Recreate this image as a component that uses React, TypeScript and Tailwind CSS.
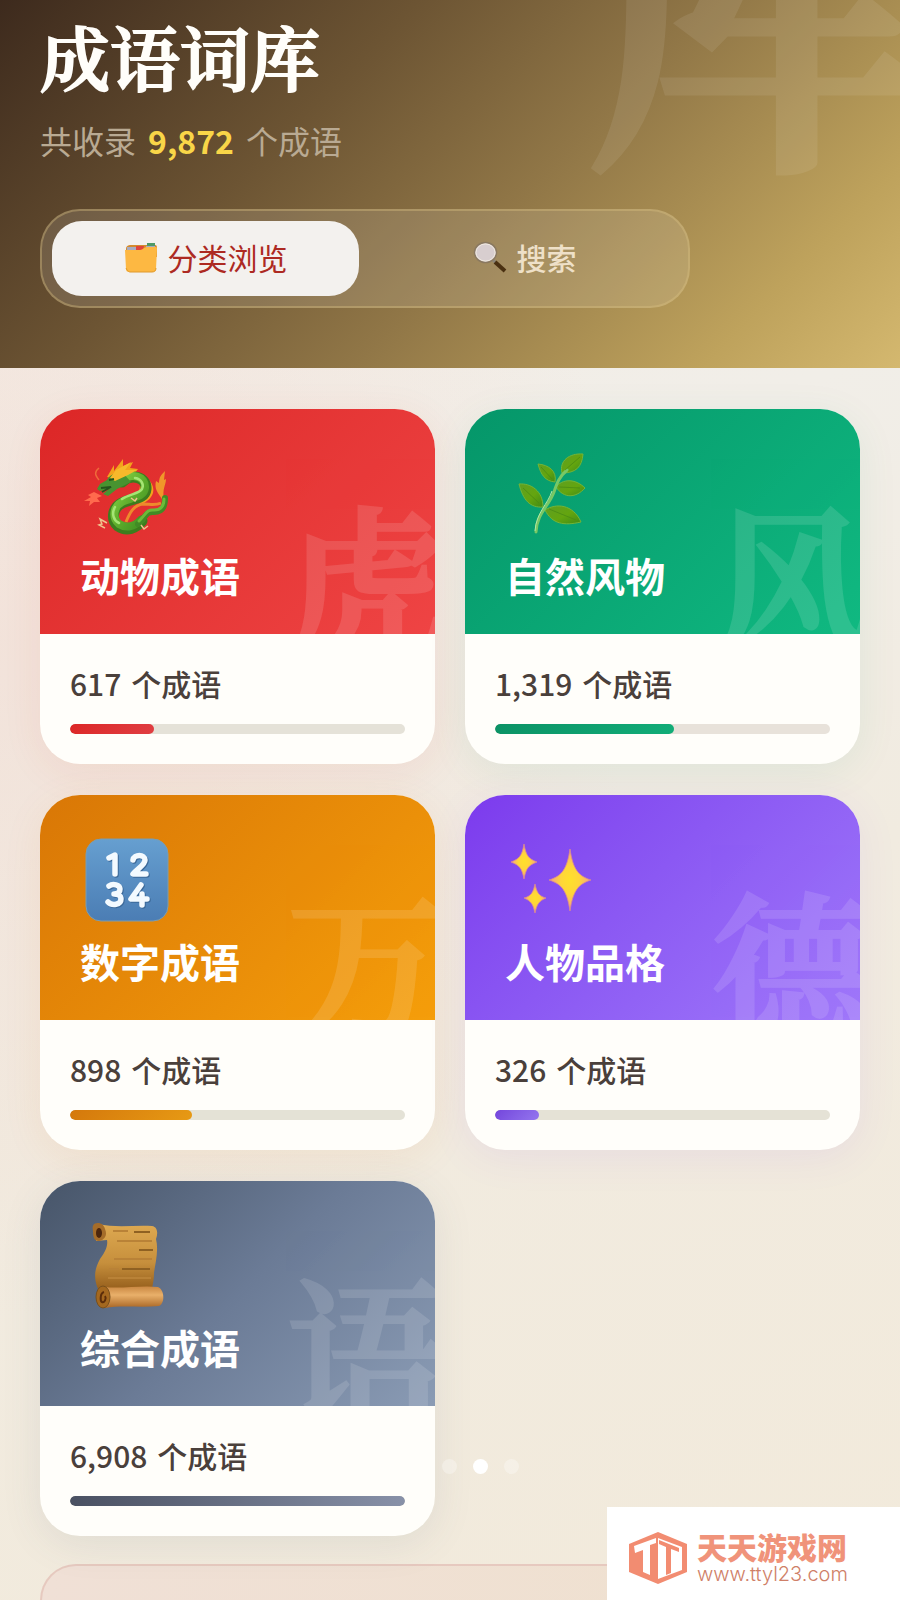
import type { ReactNode } from "react";

function DragonIcon() {
  return (
    <svg viewBox="0 0 94 90" className="h-[90px] w-[94px]" aria-hidden="true">
      <defs>
        <linearGradient id="dragon-body" x1="0" y1="0" x2="1" y2="1">
          <stop offset="0" stopColor="#8bd64a" />
          <stop offset="0.5" stopColor="#5fae2c" />
          <stop offset="1" stopColor="#3d8f22" />
        </linearGradient>
      </defs>
      <path d="M27 28l7-12 0 6 9-12 0 7 10-4-3 6 8 1-3 4c14 3 20 12 18 20-2 6-6 8-12 12l-4-4 4-20-20-7-9 4z" fill="#f3a31c" />
      <path d="M82 50c-4-6-8-10-6-18l3 2c0-6 2-8 6-12l-1 9 2-1c0 6-4 10-2 20z" fill="#f0962a" />
      <path d="M46 73c4-10 8-17 17-18 7 0 12 2 18-1" fill="none" stroke="#ee8a2c" strokeWidth="3" />
      <path d="M42 33c9-9 25-5 24 7-1 11-15 9-24 14-10 5-11 17-4 23 9 6 18 2 24-5" fill="none" stroke="#3c7d1e" strokeWidth="11" strokeLinecap="round" />
      <path d="M42 32c9-9 24-5 23 7-1 10-14 9-23 14-9 5-10 16-3 22 8 5 16 2 22-4" fill="none" stroke="url(#dragon-body)" strokeWidth="8" strokeLinecap="round" />
      <path d="M58 75c8-7 8-13 16-12 7 0 11-3 11-14" fill="none" stroke="#418b25" strokeWidth="6" strokeLinecap="round" />
      <path d="M59 72c7-7 8-12 15-11 6 0 10-3 10-11" fill="none" stroke="#6cba39" strokeWidth="3" strokeLinecap="round" />
      <path d="M55 29c7 1 9 7 7 11-3 5-13 5-20 10M35 58c-4 7-1 14 4 16" fill="none" stroke="#a5e574" strokeWidth="2.5" strokeLinecap="round" />
      <path d="M43 24c-8 0-13 1-16 7l-7 4-3 5 3 2 9-2-6 5 5 2 9-7 14-7z" fill="#489330" />
      <path d="M30 29l6-8 15-8-6 8 12 0-9 5-13 6z" fill="#f7b92b" />
      <path d="M21 39l10-1-9 5M29 31l5-1" fill="none" stroke="#24551d" strokeWidth="2" />
      <path d="M19 31c-4-5-5-8 0-12" fill="none" stroke="#ee6a3a" strokeWidth="1.5" />
      <path d="M14 43l-6 3 3 2-7 4 6 0-1 5 5-4 6 0-3-4 5-2z" fill="#ff6a4d" />
      <path d="M27 74l-7-4 2 5-3 1 6 3M61 76l3 4 4-3M51 49l4 3 2-3" fill="none" stroke="#efc28c" strokeWidth="1.5" />
    </svg>
  );
}

function HerbIcon() {
  return (
    <svg viewBox="0 0 94 90" className="h-[90px] w-[94px]" aria-hidden="true">
      <defs>
        <linearGradient id="herb-leaf" x1="0" y1="0" x2="1" y2="1">
          <stop offset="0" stopColor="#5f9f22" />
          <stop offset="0.55" stopColor="#64a50f" />
          <stop offset="1" stopColor="#3f8b16" />
        </linearGradient>
      </defs>
      <g fill="url(#herb-leaf)" stroke="#74b436" strokeWidth="1" strokeLinejoin="round">
        <path d="M14 35c12-1 24 7 24 23-13 1-20-7-24-23z" />
        <path d="M33 15c11 1 19 7 17 18-10-1-14-7-17-18z" />
        <path d="M78 5c-14-1-24 7-21 19 14 0 20-6 21-19z" />
        <path d="M80 39c-10-10-23-9-29-1 8 12 20 11 29 1z" />
        <path d="M76 73C68 55 51 54 40 61c7 14 19 16 36 12z" />
      </g>
      <path d="M31 83c1-19 13-26 18-40 3-9 5-15 13-22" fill="none" stroke="#77c865" strokeWidth="3" strokeLinecap="round" />
      <path d="M30 82c1-18 13-27 17-40" fill="none" stroke="#b3e8a5" strokeWidth="1" />
      <path d="M18 39l16 15M36 18l11 12M75 8L60 21M54 38l21 1M44 60l27 11" stroke="#4a8c14" strokeWidth="0.8" />
    </svg>
  );
}

const KEYCAP_DIGITS = [
  "M29 23l6-3v19",
  "M53 25c1-6 12-6 12 0 0 5-7 8-12 14h13",
  "M29 51c4-3 11-1 11 3 0 4-3 5-6 5 4 0 7 2 7 5 0 6-9 7-13 3",
  "M61 50L51 64h16M62 59v11",
].join("");

function NumbersIcon() {
  return (
    <svg viewBox="0 0 94 90" className="h-[90px] w-[94px]" aria-hidden="true">
      <defs>
        <linearGradient id="key-face" x1="0" y1="0" x2="0" y2="1">
          <stop offset="0" stopColor="#669fd0" />
          <stop offset="1" stopColor="#4b7db4" />
        </linearGradient>
      </defs>
      <rect x="6" y="4" width="82" height="82" rx="15" fill="url(#key-face)" stroke="#7b9db0" />
      <g fill="none" strokeWidth="5.500" strokeLinecap="round" strokeLinejoin="round">
        <path d={KEYCAP_DIGITS} stroke="#3b6898" transform="translate(1 1)" />
        <path d={KEYCAP_DIGITS} stroke="#f3faff" />
      </g>
    </svg>
  );
}

function SparklesIcon() {
  return (
    <svg viewBox="0 0 94 90" className="h-[90px] w-[94px]" aria-hidden="true">
      <defs>
        <radialGradient id="spark">
          <stop offset="0" stopColor="#ffe02b" />
          <stop offset="0.45" stopColor="#ffd53a" />
          <stop offset="1" stopColor="#f5a08c" />
        </radialGradient>
      </defs>
      <g fill="url(#spark)" stroke="#d98a8f" strokeWidth="0.8">
        <path d="M65 14c3 20 8 27 21 31-13 4-18 11-21 31-3-20-8-27-21-31 13-4 18-11 21-31z" />
        <path d="M19 9c2 12 5 15 13 18-8 3-11 6-13 17-2-11-5-14-13-17 8-3 11-6 13-18z" />
        <path d="M30 49c2 9 4 12 11 14-7 3-9 6-11 15-2-9-4-12-11-15 7-2 9-5 11-14z" />
      </g>
    </svg>
  );
}

function ScrollIcon() {
  return (
    <svg viewBox="0 0 94 90" className="h-[90px] w-[94px]" aria-hidden="true">
      <defs>
        <linearGradient id="scroll-sheet" x1="0" y1="0" x2="0" y2="1">
          <stop offset="0" stopColor="#dea951" />
          <stop offset="0.6" stopColor="#c68f3c" />
          <stop offset="1" stopColor="#97601d" />
        </linearGradient>
        <linearGradient id="scroll-roll" x1="0" y1="0" x2="0" y2="1">
          <stop offset="0" stopColor="#c98742" />
          <stop offset="0.4" stopColor="#e9b06a" />
          <stop offset="1" stopColor="#a96625" />
        </linearGradient>
      </defs>
      <path d="M18 3c18 4 36 1 54 2 6 1 6 8 4 13 3 12-1 25-2 34 0 6-1 10-2 16H18c-5-12-3-21 2-30 6-8 8-14 7-19l-11 1z" fill="url(#scroll-sheet)" />
      <path d="M18 2c-5 0-6 3-5 8 0 6 1 10 6 10 5-1 9-5 6-12-1-4-4-6-7-6z" fill="#a56c29" />
      <ellipse cx="19" cy="12" rx="3" ry="5" fill="#4c260d" />
      <path d="M24 66c18 2 37-2 54 0 7 3 7 17 1 19-18 2-37-1-54 2z" fill="url(#scroll-roll)" />
      <ellipse cx="23" cy="76" rx="7" ry="11" fill="#a4681f" stroke="#79501c" />
      <path d="M24 71c-4 1-4 9-2 10s5-3 3-6" fill="none" stroke="#5c2d0a" strokeWidth="2" />
      <path d="M54 11h16M59 29h14M42 48h28" stroke="#8f6122" strokeWidth="2" />
      <path d="M33 10h15M37 20h35M34 38h38M29 48h10M28 57h43" stroke="#b98237" strokeWidth="2" />
    </svg>
  );
}

function FolderIcon() {
  return (
    <svg viewBox="0 0 34 32" className="h-8 w-[34px] shrink-0" aria-hidden="true">
      <path d="M2 8c0-3 2-4 5-4h24c2 0 2 2 2 4v8H2z" fill="#d48a2d" />
      <path d="M3 6h9l2 2h8V5h9v4H3z" fill="#a7abc0" />
      <path d="M12 5h8l-1 4h-7z" fill="#e0453a" />
      <path d="M23 2h8v3h-8z" fill="#4f9a67" />
      <path d="M1 9h15c3 0 4-3 7-3h9c1 0 1 1 1 2l-1 20c0 2-1 3-3 3H5c-2 0-3-1-3-3z" fill="#fdb842" />
      <path d="M2 27l1 2c1 1 2 2 3 2h22c2 0 4-1 4-4" fill="none" stroke="#e09a2c" />
    </svg>
  );
}

function MagnifierIcon() {
  return (
    <svg viewBox="0 0 34 32" className="h-8 w-[34px] shrink-0" aria-hidden="true">
      <path d="M20 19l3 3" stroke="#8a8478" strokeWidth="3" />
      <path d="M22 21l10 9" stroke="#4a3011" strokeWidth="4" />
      <ellipse cx="12.500" cy="11.500" rx="11" ry="10" fill="#d8cecf" stroke="#8a7960" strokeWidth="1.500" />
      <ellipse cx="12.500" cy="11.500" rx="9.500" ry="8.500" fill="none" stroke="#efe8df" />
    </svg>
  );
}

function SiteLogo() {
  return (
    <svg viewBox="0 0 58 52" className="h-[52px] w-[58px] shrink-0" aria-hidden="true">
      <path d="M29 0l29 12v28L29 52 0 40V12z" fill="#f28c71" />
      <path d="M5 14l22-8v5l-6 2v30l-7-3V18l-8 3z" fill="#fff" />
      <path d="M29 6l24 9v23l-24 9z" fill="#fff" />
      <path d="M30 8l20 8v4l-8-3v24l-5 2V15l-7-3z" fill="#f28c71" />
    </svg>
  );
}

type Category = {
  name: string;
  mark: string;
  count: string;
  percent: number;
  gradient: string;
  bar: string;
  track: string;
  shadow: string;
  icon: ReactNode;
};

const categories: Category[] = [
  {
    name: "动物成语",
    mark: "虎",
    count: "617",
    percent: 25,
    gradient: "bg-linear-135 from-[#dc2626] to-[#ef4444]",
    bar: "bg-linear-135 from-[#dc2626] to-[#e03e42]",
    track: "bg-[#e5e2d8]",
    shadow: "shadow-[0_8px_40px_rgba(220,60,38,0.08)]",
    icon: <DragonIcon />,
  },
  {
    name: "自然风物",
    mark: "风",
    count: "1,319",
    percent: 53.5,
    gradient: "bg-linear-135 from-[#059669] to-[#10b981]",
    bar: "bg-linear-135 from-[#0b9265] to-[#12ad78]",
    track: "bg-[#e8e2da]",
    shadow: "shadow-[0_8px_40px_rgba(5,150,105,0.08)]",
    icon: <HerbIcon />,
  },
  {
    name: "数字成语",
    mark: "万",
    count: "898",
    percent: 36.4,
    gradient: "bg-linear-135 from-[#d97706] to-[#f59e0b]",
    bar: "bg-linear-135 from-[#d4780c] to-[#e79a14]",
    track: "bg-[#e4e2d6]",
    shadow: "shadow-[0_8px_40px_rgba(217,119,6,0.08)]",
    icon: <NumbersIcon />,
  },
  {
    name: "人物品格",
    mark: "德",
    count: "326",
    percent: 13.2,
    gradient: "bg-linear-135 from-[#7c3aed] to-[#a078fa]",
    bar: "bg-linear-135 from-[#7445dc] to-[#9475ee]",
    track: "bg-[#e5e2d6]",
    shadow: "shadow-[0_8px_40px_rgba(124,58,237,0.08)]",
    icon: <SparklesIcon />,
  },
  {
    name: "综合成语",
    mark: "语",
    count: "6,908",
    percent: 100,
    gradient: "bg-linear-135 from-[#475569] via-[#6b7b96] to-[#8a9bb4]",
    bar: "bg-linear-90 from-[#4a5162] to-[#8891a8]",
    track: "bg-[#e5e2d6]",
    shadow: "shadow-[0_8px_40px_rgba(71,85,105,0.10)]",
    icon: <ScrollIcon />,
  },
];

function CategoryCard({ item }: { item: Category }) {
  return (
    <a href="#" className={`block overflow-hidden rounded-[40px] bg-[#fffefa] ${item.shadow}`}>
      <div className={`relative overflow-hidden px-10 pt-10 pb-[29px] ${item.gradient}`}>
        <span
          aria-hidden="true"
          className="absolute -right-3 -bottom-5 font-['Noto_Serif_CJK_SC','Noto_Sans_CJK_SC',serif] text-[160px] leading-none font-semibold text-white opacity-12 [-webkit-text-stroke:4px_white]"
        >
          {item.mark}
        </span>
        {item.icon}
        <h2 className="relative mt-[6px] text-[40px] leading-[60px] font-bold text-white">{item.name}</h2>
      </div>
      <div className="px-[30px] pt-7 pb-[30px]">
        <p className="flex gap-[10px] text-[30px] leading-[42px] font-medium text-[#4a403b]">
          <span>{item.count}</span>
          <span>个成语</span>
        </p>
        <div className={`mt-5 h-[10px] overflow-hidden rounded-full ${item.track}`}>
          <div className={`h-full rounded-full ${item.bar}`} style={{ width: `${item.percent}%` }} />
        </div>
      </div>
    </a>
  );
}

export default function App() {
  return (
    <div className="relative flex min-h-screen flex-col overflow-hidden bg-[radial-gradient(ellipse_at_0%_40%,rgba(244,205,192,0.35),transparent_50%),linear-gradient(160deg,#f5ede6_0%,#f1eee8_35%,#f1ebe0_60%,#f2eadb_100%)] font-['Noto_Sans_CJK_SC',sans-serif]">
      <header className="relative overflow-hidden bg-[linear-gradient(135deg,#3d2a1d_0%,#6c5433_33%,#917747_57%,#bea25c_84%,#d4b86f_100%)] px-10 pt-[14px] pb-[60px]">
        <span
          aria-hidden="true"
          className="absolute -top-[184px] -right-9 font-['Noto_Serif_CJK_SC','Noto_Sans_CJK_SC',serif] text-[350px] leading-none font-semibold text-white opacity-8 [-webkit-text-stroke:8px_white]"
        >
          库
        </span>
        <h1 className="relative font-['Noto_Serif_CJK_SC','Noto_Sans_CJK_SC',serif] text-[70px] leading-[84px] font-semibold text-[#fffefa] [-webkit-text-stroke:2px_#fffefa]">
          成语词库
        </h1>
        <p className="relative mt-[18px] flex gap-3 text-[32px] leading-[48px] text-[#b9aa93]">
          <span>共收录</span>
          <strong className="font-bold text-[#f9d648]">9,872</strong>
          <span>个成语</span>
        </p>
        <div
          role="tablist"
          className="relative mt-[45px] grid w-full max-w-[650px] grid-cols-2 gap-3 rounded-[40px] border-2 border-[#d8bd80]/40 bg-white/12 p-[10px]"
        >
          <button
            role="tab"
            aria-selected="true"
            className="flex h-[75px] items-center justify-center gap-[10px] rounded-[30px] bg-[#f3f1ee] pb-1 text-[30px] leading-[44px] text-[#ad2a22]"
          >
            <FolderIcon />
            分类浏览
          </button>
          <button
            role="tab"
            aria-selected="false"
            className="flex h-[75px] items-center justify-center gap-[10px] rounded-[30px] pb-1 text-[30px] leading-[44px] font-medium text-[#eee0c8]"
          >
            <MagnifierIcon />
            搜索
          </button>
        </div>
      </header>

      <main className="flex flex-1 flex-col px-10 pt-[41px]">
        <div className="relative grid grid-cols-2 gap-x-[30px] gap-y-[31px]">
          {categories.map((item) => (
            <CategoryCard key={item.name} item={item} />
          ))}
          <div className="absolute bottom-[62px] left-1/2 flex gap-4" aria-hidden="true">
            <span className="-ml-2 size-[15px] rounded-full bg-white/30" />
            <span className="size-[15px] rounded-full bg-white" />
            <span className="size-[15px] rounded-full bg-white/30" />
          </div>
        </div>
        <section className="mt-7 min-h-8 flex-1 rounded-t-[40px] border-2 border-b-0 border-[#e6c9bf] bg-linear-90 from-[#f0e0d6] to-[#efe1cf]" />
      </main>

      <aside className="absolute right-0 bottom-0 flex h-[93px] w-[293px] items-center gap-[10px] bg-white pt-2 pl-[22px]">
        <SiteLogo />
        <div className="flex flex-col">
          <span className="text-[30px] leading-[32px] font-black text-[#f0937a]">天天游戏网</span>
          <a href="#" className="font-['Inter',sans-serif] text-[20px] leading-[24px] font-light text-[#cf7f68]">
            www.ttyl23.com
          </a>
        </div>
      </aside>
    </div>
  );
}
